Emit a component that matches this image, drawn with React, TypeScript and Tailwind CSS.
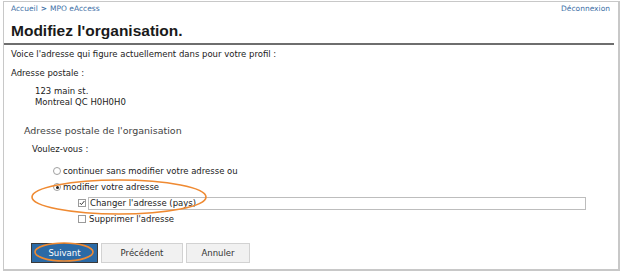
import React from "react";

function Radio({ checked }: { checked?: boolean }) {
  return (
    <span className="inline-flex w-[8px] h-[8px] rounded-full border border-[#a0a0a0] bg-white items-center justify-center shrink-0">
      {checked && <span className="w-[3px] h-[3px] rounded-full bg-[#222]" />}
    </span>
  );
}

function Check({ checked }: { checked?: boolean }) {
  return (
    <span className="inline-flex w-[8px] h-[8px] border border-[#9a9a9a] bg-white items-center justify-center shrink-0">
      {checked && (
        <svg width="6" height="6" viewBox="0 0 6 6">
          <path d="M0.8 3 L2.4 4.6 L5.4 1" stroke="#333" strokeWidth="1" fill="none" />
        </svg>
      )}
    </span>
  );
}

export default function App() {
  return (
    <div className="relative w-[624px] h-[273px] bg-white font-['DejaVu_Sans',sans-serif] text-[#222] overflow-hidden">
      <div className="pt-[1px] pl-[3px]">
        <div className="w-[617px] h-[270px] border border-[#c8c8c8] border-r-2 border-b-2 box-border">
          <div className="flex justify-between pl-[7px] pr-[8px] pt-[2px] text-[7.5px] leading-[10px] text-[#3d6fa6]">
            <span>
              Accueil<span className="mx-[3px] font-bold">&gt;</span>MPO eAccess
            </span>
            <span>Déconnexion</span>
          </div>
          <div className="mt-[7px] pl-[7px] font-['Liberation_Sans',sans-serif] font-bold text-[15.5px] leading-[20px] text-[#1a1a1a]">
            Modifiez l'organisation.
          </div>
          <div className="mt-[2px] mr-[4px] border-t-[2px] border-[#6e6e6e]" />
          <div className="mt-[4px] pl-[7px] text-[8.5px] leading-[11px]">
            Voice l'adresse qui figure actuellement dans pour votre profil :
          </div>
          <div className="mt-[8px] pl-[7px] text-[8.5px] leading-[11px]">Adresse postale :</div>
          <div className="mt-[7px] pl-[31px] text-[8.5px] leading-[11px]">
            <div>123 main st.</div>
            <div>Montreal QC H0H0H0</div>
          </div>
          <div className="mt-[16px] pl-[20px] text-[9.5px] leading-[13px] text-[#444]">
            Adresse postale de l'organisation
          </div>
          <div className="mt-[7px] pl-[28px] text-[8.5px] leading-[11px]">Voulez-vous :</div>
          <div className="mt-[8px] text-[8.5px] leading-[11px]">
            <div className="h-[16px] flex items-center pl-[49px] gap-[2px]">
              <Radio />
              <span>continuer sans modifier votre adresse ou</span>
            </div>
            <div className="h-[16px] flex items-center pl-[49px] gap-[2px]">
              <Radio checked />
              <span>modifier votre adresse</span>
            </div>
            <div className="h-[16px] flex items-center pl-[74px] gap-[2px]">
              <Check checked />
              <span className="w-[498px] h-[13px] border border-[#bdbdbd] pl-[1px] leading-[11px]">
                Changer l'adresse (pays)
              </span>
            </div>
            <div className="h-[16px] flex items-center pl-[74px] gap-[3px]">
              <Check />
              <span>Supprimer l'adresse</span>
            </div>
          </div>
          <div className="mt-[16px] pl-[27px] flex gap-[2px] text-[8.5px]">
            <button className="w-[67px] h-[20px] bg-[#2b6aa6] border border-[#3a3a3a] text-white">Suivant</button>
            <button className="w-[82px] h-[20px] ml-[1px] bg-[#f1f1f1] border border-[#d2d2d2] text-[#333]">Précédent</button>
            <button className="w-[64px] h-[20px] ml-[1px] bg-[#f1f1f1] border border-[#d2d2d2] text-[#333]">Annuler</button>
          </div>
        </div>
      </div>
      <svg className="absolute inset-0 pointer-events-none" width="624" height="273">
        <ellipse cx="119" cy="197" rx="87" ry="17" fill="none" stroke="#ef8a32" strokeWidth="1.6" />
        <ellipse cx="64" cy="252" rx="29" ry="9" fill="none" stroke="#ef8a32" strokeWidth="1.6" />
      </svg>
    </div>
  );
}
